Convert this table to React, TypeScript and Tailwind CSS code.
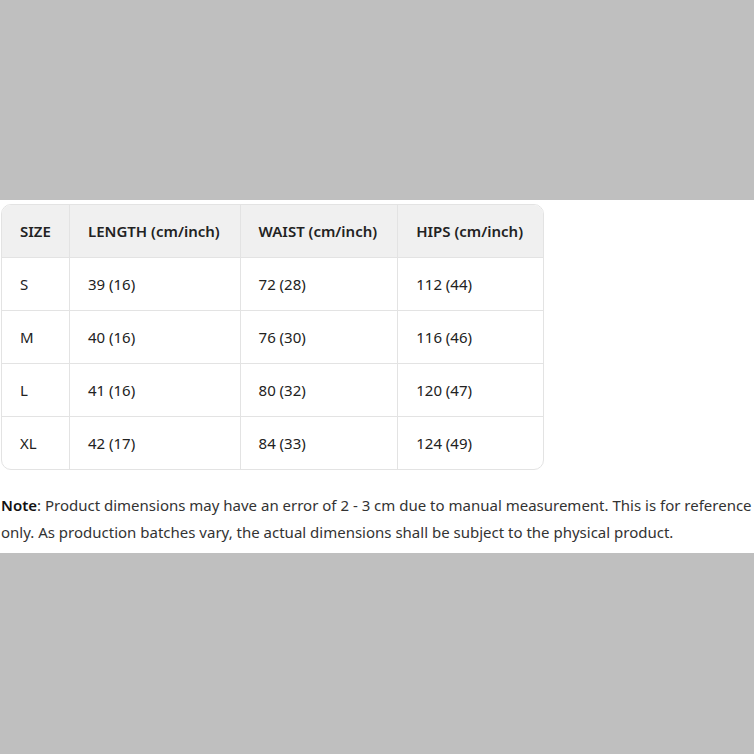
import React from "react";

const rows = [
  ["S", "39 (16)", "72 (28)", "112 (44)"],
  ["M", "40 (16)", "76 (30)", "116 (46)"],
  ["L", "41 (16)", "80 (32)", "120 (47)"],
  ["XL", "42 (17)", "84 (33)", "124 (49)"],
];

const widths = ["w-[68px]", "w-[171px]", "w-[158px]", "w-[145px]"];

export default function App() {
  return (
    <div
      className="w-full h-[754px] bg-[#bfbfbf] pt-[200px]"
      style={{ fontFamily: '"Noto Sans", "Open Sans", sans-serif' }}
    >
      <div className="bg-white h-[353px] pt-[4px]">
        <div className="ml-px w-[543px] border border-[#e3e3e3] rounded-[10px] overflow-hidden">
          <table className="w-full border-separate border-spacing-0 text-[15px] text-[#222]">
            <thead>
              <tr className="bg-[#f0f0f0]">
                {["SIZE", "LENGTH (cm/inch)", "WAIST (cm/inch)", "HIPS (cm/inch)"].map((h, i) => (
                  <th
                    key={h}
                    className={`${widths[i]} h-[53px] px-[18px] text-left font-semibold border-b border-[#e3e3e3] ${i < 3 ? "border-r" : ""}`}
                  >
                    {h}
                  </th>
                ))}
              </tr>
            </thead>
            <tbody>
              {rows.map((r, ri) => (
                <tr key={ri}>
                  {r.map((c, ci) => (
                    <td
                      key={ci}
                      className={`${ri < 3 ? "h-[53px]" : "h-[52px]"} px-[18px] text-left font-normal border-[#e3e3e3] ${ri < 3 ? "border-b" : ""} ${ci < 3 ? "border-r" : ""}`}
                    >
                      {c}
                    </td>
                  ))}
                </tr>
              ))}
            </tbody>
          </table>
        </div>
        <p className="mt-[22px] ml-px text-[15px] leading-[27px] text-[#333]">
          <span className="font-semibold text-[#111]">Note</span>: Product dimensions may have an error of 2 - 3 cm due to manual measurement. This is for reference only. As production batches vary, the actual dimensions shall be subject to the physical product.
        </p>
      </div>
    </div>
  );
}
